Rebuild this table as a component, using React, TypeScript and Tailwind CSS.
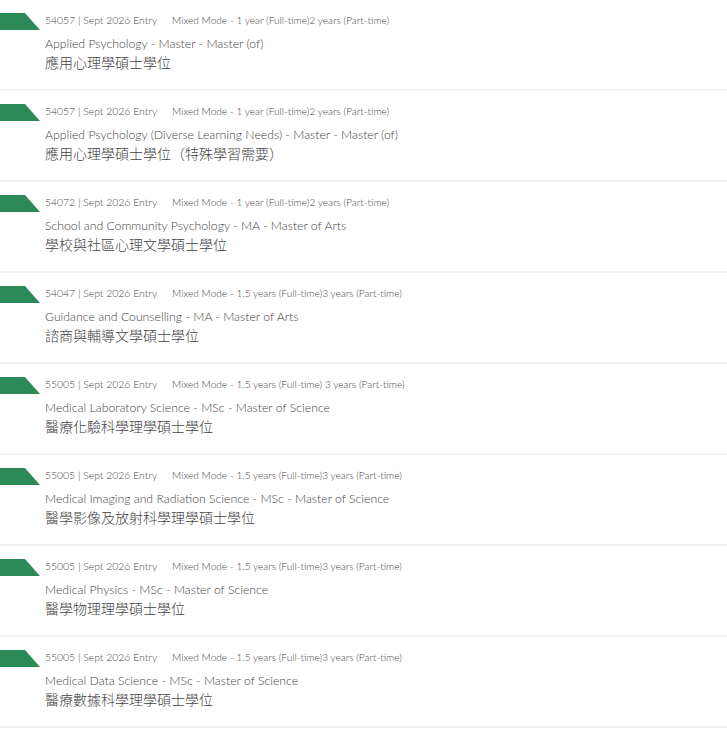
const programmes = [
  {
    code: "54057",
    mode: "Mixed Mode - 1 year (Full-time)2 years (Part-time)",
    title: "Applied Psychology - Master - Master (of)",
    zh: "應用心理學碩士學位",
  },
  {
    code: "54057",
    mode: "Mixed Mode - 1 year (Full-time)2 years (Part-time)",
    title: "Applied Psychology (Diverse Learning Needs) - Master - Master (of)",
    zh: "應用心理學碩士學位（特殊學習需要）",
  },
  {
    code: "54072",
    mode: "Mixed Mode - 1 year (Full-time)2 years (Part-time)",
    title: "School and Community Psychology - MA - Master of Arts",
    zh: "學校與社區心理文學碩士學位",
  },
  {
    code: "54047",
    mode: "Mixed Mode - 1.5 years (Full-time)3 years (Part-time)",
    title: "Guidance and Counselling - MA - Master of Arts",
    zh: "諮商與輔導文學碩士學位",
  },
  {
    code: "55005",
    mode: "Mixed Mode - 1.5 years (Full-time) 3 years (Part-time)",
    title: "Medical Laboratory Science - MSc - Master of Science",
    zh: "醫療化驗科學理學碩士學位",
  },
  {
    code: "55005",
    mode: "Mixed Mode - 1.5 years (Full-time)3 years (Part-time)",
    title: "Medical Imaging and Radiation Science - MSc - Master of Science",
    zh: "醫學影像及放射科學理學碩士學位",
  },
  {
    code: "55005",
    mode: "Mixed Mode - 1.5 years (Full-time)3 years (Part-time)",
    title: "Medical Physics - MSc - Master of Science",
    zh: "醫學物理理學碩士學位",
  },
  {
    code: "55005",
    mode: "Mixed Mode - 1.5 years (Full-time)3 years (Part-time)",
    title: "Medical Data Science - MSc - Master of Science",
    zh: "醫療數據科學理學碩士學位",
  },
];

export default function App() {
  return (
    <div className="w-[727px] bg-white font-['Lato','Noto_Sans_CJK_TC',sans-serif]">
      {programmes.map((p, i) => (
        <div
          key={i}
          className="box-border flex h-[91px] border-b-2 border-[#f0f0f0] pt-[13px]"
        >
          {/* green ribbon */}
          <div className="h-[17px] w-[40px] shrink-0 bg-[#2b8a57] [clip-path:polygon(0_0,25px_0,40px_100%,0_100%)]" />
          <div className="ml-[5px] flex flex-col">
            <div className="flex h-[15px] items-center font-light leading-[15px] text-[#444]">
              <span className="text-[10.4px]">{p.code} | Sept 2026 Entry</span>
              <span className="ml-[15px] text-[10.15px]">{p.mode}</span>
            </div>
            <div className="mt-[8px] text-[12.25px] font-light leading-[16px] text-[#444]">
              {p.title}
            </div>
            <div className="font-['Noto_Sans_CJK_TC',sans-serif] text-[14px] font-light leading-[20px] text-[#444]">
              {p.zh}
            </div>
          </div>
        </div>
      ))}
    </div>
  );
}
